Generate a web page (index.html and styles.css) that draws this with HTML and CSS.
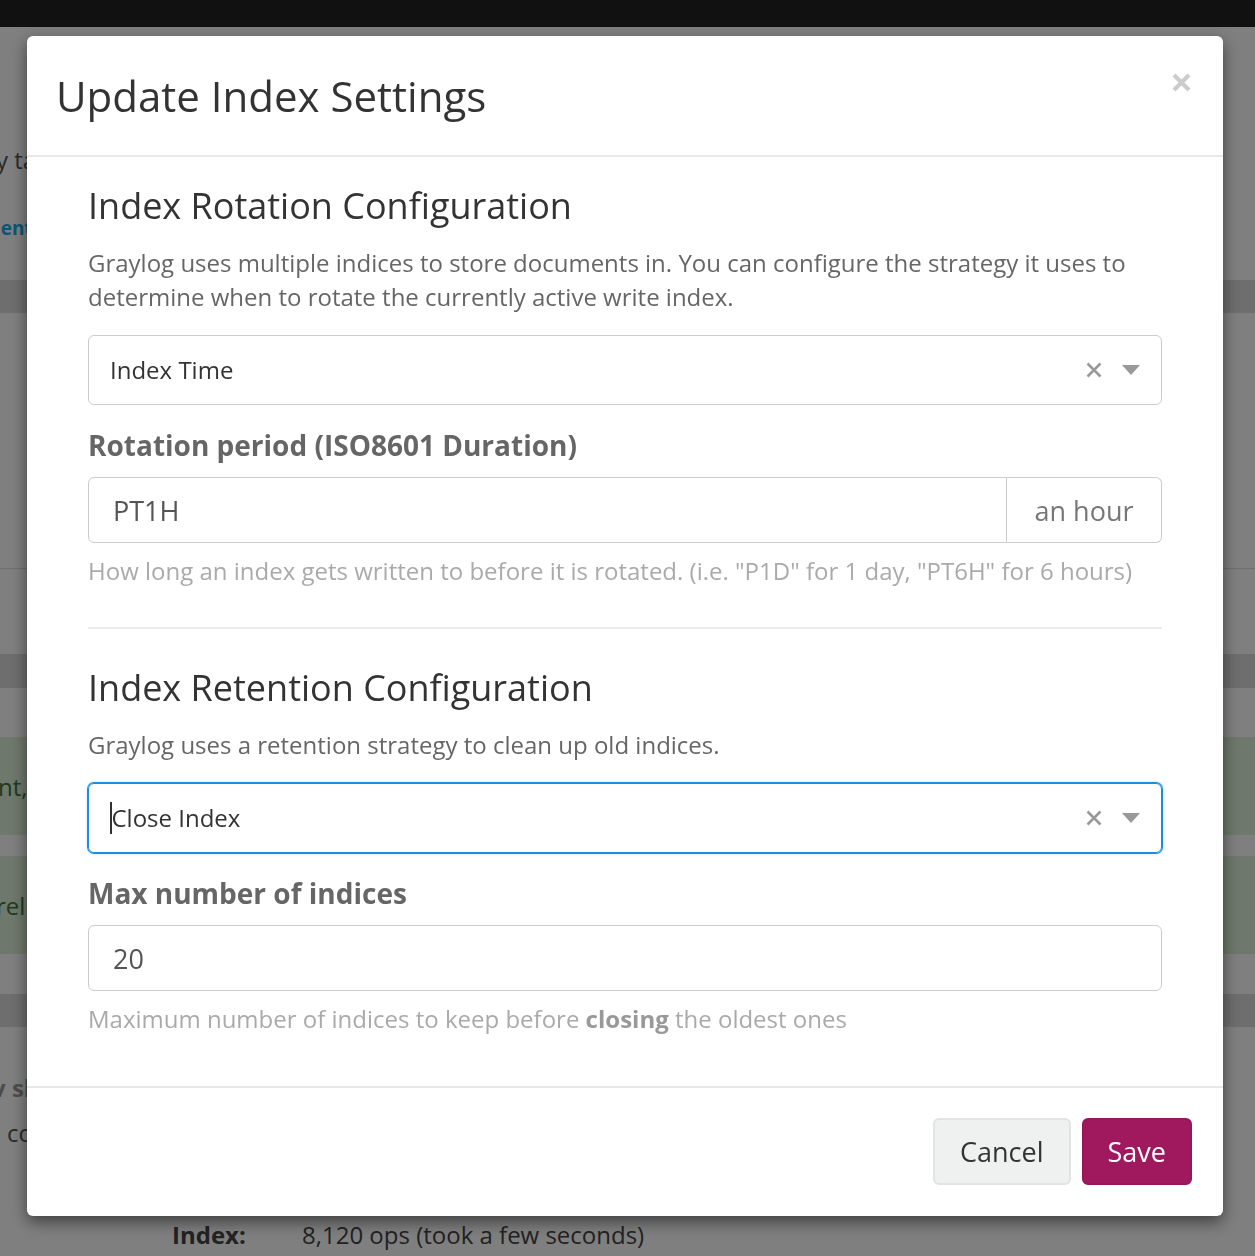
FILE: index.html
```html
<!DOCTYPE html>
<html lang="en">
<head>
<meta charset="utf-8">
<title>Update Index Settings</title>
<link rel="stylesheet" href="styles.css">
</head>
<body>
<div class="page">
  <div class="navbar"></div>
  <div class="bg-intro">
    <div class="bg-text">y take care of the rest of the setup</div>
    <div class="bg-link">ment settings</div>
  </div>
  <div class="bg-band band-a"></div>
  <div class="bg-block"></div>
  <div class="bg-gap gap-85"></div>
  <div class="bg-band band-b"></div>
  <div class="bg-gap gap-49"></div>
  <div class="bg-alert"><span class="bg-alert-text">nt, the index set is ready</span></div>
  <div class="bg-gap gap-21"></div>
  <div class="bg-alert"><span class="bg-alert-text alt">rel related indices</span></div>
  <div class="bg-gap gap-40"></div>
  <div class="bg-band band-a"></div>
  <div class="bg-bottom">
    <div class="bg-muted">v shards and replicas</div>
    <div class="bg-plain">co configuration</div>
    <div class="bg-stat"><span class="bg-stat-label">Index:</span><span class="bg-stat-value">8,120 ops (took a few seconds)</span></div>
  </div>
</div>

<div class="backdrop"></div>

<div class="modal">
  <div class="modal-header">
    <h2 class="modal-title">Update Index Settings</h2>
    <button class="close" type="button" aria-label="Close">
      <svg width="19" height="19" viewBox="0 0 19 19"><path d="M2 2 L17 17 M17 2 L2 17" stroke="#cccccc" stroke-width="4.2" stroke-linecap="butt" fill="none"/></svg>
    </button>
  </div>
  <div class="modal-body">
    <section class="config">
      <h3 class="config-title">Index Rotation Configuration</h3>
      <p class="config-desc">Graylog uses multiple indices to store documents in. You can configure the strategy it uses to determine when to rotate the currently active write index.</p>
      <div class="select">
        <span class="select-value">Index Time</span>
        <span class="select-clear"><svg width="16" height="16" viewBox="0 0 16 16"><path d="M1.5 1.5 L14.5 14.5 M14.5 1.5 L1.5 14.5" stroke="#999999" stroke-width="2.6" fill="none"/></svg></span>
        <span class="select-arrow"></span>
      </div>
      <label class="field-label">Rotation period (ISO8601 Duration)</label>
      <div class="input-group">
        <div class="input grow">PT1H</div>
        <div class="addon">an hour</div>
      </div>
      <p class="help">How long an index gets written to before it is rotated. (i.e. "P1D" for 1 day, "PT6H" for 6 hours)</p>
    </section>
    <hr class="divider">
    <section class="config">
      <h3 class="config-title">Index Retention Configuration</h3>
      <p class="config-desc">Graylog uses a retention strategy to clean up old indices.</p>
      <div class="select focused">
        <span class="caret-bar"></span><span class="select-value">Close Index</span>
        <span class="select-clear"><svg width="16" height="16" viewBox="0 0 16 16"><path d="M1.5 1.5 L14.5 14.5 M14.5 1.5 L1.5 14.5" stroke="#999999" stroke-width="2.6" fill="none"/></svg></span>
        <span class="select-arrow"></span>
      </div>
      <label class="field-label">Max number of indices</label>
      <div class="input">20</div>
      <p class="help">Maximum number of indices to keep before <strong>closing</strong> the oldest ones</p>
    </section>
  </div>
  <div class="modal-footer">
    <button class="btn btn-default" type="button">Cancel</button>
    <button class="btn btn-primary" type="button">Save</button>
  </div>
</div>
</body>
</html>
```

FILE: styles.css
```css
* { box-sizing: border-box; }
html, body { margin: 0; padding: 0; }
body {
  font-family: "Open Sans", "Noto Sans", "DejaVu Sans", sans-serif;
  background: #ffffff;
  color: #333333;
  width: 1255px;
  height: 1256px;
  overflow: hidden;
}

/* ---------- background page ---------- */
.page { width: 1255px; }
.navbar { height: 27px; background: #222222; }
.bg-intro { height: 253px; padding-top: 116px; font-size: 24px; line-height: 34px; }
.bg-text { margin-left: -4px; white-space: nowrap; color: #555555; }
.bg-link { margin-top: 34px; margin-left: -18px; white-space: nowrap; color: #16ace3; font-weight: 700; font-size: 19px; }
.bg-band { background: #dddddd; }
.band-a { height: 33px; }
.band-b { height: 34px; }
.bg-block { height: 256px; border-bottom: 1px solid #dddddd; }
.gap-85 { height: 85px; }
.gap-49 { height: 49px; }
.gap-21 { height: 21px; }
.gap-40 { height: 40px; }
.bg-alert {
  height: 98px;
  background: #dff0d8;
  display: flex;
  align-items: center;
  font-size: 24px;
  color: #3c763d;
  white-space: nowrap;
}
.bg-alert-text { margin-left: -2px; }
.bg-alert-text.alt { margin-left: -4px; }
.bg-bottom { padding-top: 44px; font-size: 24px; line-height: 34px; white-space: nowrap; }
.bg-muted { margin-left: -8px; color: #999999; font-weight: 700; }
.bg-plain { margin-top: 11px; margin-left: 7px; color: #555555; }
.bg-stat { margin-top: 68px; padding-left: 172px; display: flex; color: #444444; }
.bg-stat-label { width: 130px; font-weight: 700; }

.backdrop {
  position: fixed;
  inset: 0;
  background: rgba(0, 0, 0, 0.5);
}

/* ---------- modal ---------- */
.modal {
  position: fixed;
  left: 27px;
  top: 36px;
  width: 1196px;
  background: #ffffff;
  border-radius: 6px;
  box-shadow: 0 6px 16px rgba(0, 0, 0, 0.5);
}
.modal-header {
  position: relative;
  height: 121px;
  padding: 37px 31px 0 29px;
  border-bottom: 2px solid #e8e8e8;
}
.modal-title {
  margin: 0;
  font-size: 42px;
  line-height: 46px;
  font-weight: 400;
  color: #333333;
}
.close {
  position: absolute;
  right: 32px;
  top: 37px;
  width: 19px;
  height: 19px;
  padding: 0;
  border: 0;
  background: transparent;
  display: block;
}
.close svg { display: block; }

.modal-body { padding: 29px 61px 49px 61px; }
.config-title {
  margin: 0;
  font-size: 36px;
  line-height: 40px;
  font-weight: 400;
  color: #333333;
}
.config-desc {
  margin: 20px 0 0 0;
  font-size: 24px;
  line-height: 34.3px;
  color: #666666;
}

.select {
  margin-top: 20px;
  height: 70px;
  border: 1px solid #cccccc;
  border-radius: 6px;
  display: flex;
  align-items: center;
  padding: 0 21px 0 21px;
  font-size: 24px;
  color: #333333;
}
.select.focused {
  border-color: #1a8de0;
  box-shadow: 0 0 0 1px #1a8de0, 0 0 4px rgba(26, 141, 224, 0.35);
}
.select-value { flex: 1; }
.caret-bar {
  width: 1.5px;
  height: 32px;
  background: #333333;
}
.select-clear { display: flex; margin-right: 20px; }
.select-arrow {
  width: 0;
  height: 0;
  border-left: 9.5px solid transparent;
  border-right: 9.5px solid transparent;
  border-top: 10px solid #999999;
}

.field-label {
  display: block;
  margin-top: 21px;
  font-size: 28px;
  line-height: 38.6px;
  font-weight: 700;
  color: #666666;
}
.input-group { margin-top: 13px; display: flex; }
.input {
  height: 66px;
  border: 1px solid #cccccc;
  border-radius: 6px;
  padding: 0 24px;
  display: flex;
  align-items: center;
  font-size: 27px;
  color: #555555;
}
.field-label + .input { margin-top: 13px; }
.input.grow { flex: 1; border-radius: 6px 0 0 6px; }
.addon {
  height: 66px;
  width: 155px;
  border: 1px solid #cccccc;
  border-left: 0;
  border-radius: 0 6px 6px 0;
  display: flex;
  align-items: center;
  justify-content: center;
  font-size: 27px;
  color: #777777;
  background: #ffffff;
}
.help {
  margin: 11px 0 0 0;
  font-size: 24px;
  line-height: 34.3px;
  color: #aaaaaa;
}
.help strong { font-weight: 700; color: #999999; }
.divider {
  margin: 39px 0 39px 0;
  border: 0;
  border-top: 2px solid #ebebeb;
  height: 0;
}

.modal-footer {
  border-top: 2px solid #e8e8e8;
  padding: 30px 31px 31px 31px;
  display: flex;
  justify-content: flex-end;
  gap: 11px;
}
.btn {
  height: 67px;
  padding: 0 25px;
  border-radius: 6px;
  font-family: inherit;
  font-size: 27px;
  line-height: 1;
  border: 2px solid transparent;
}
.btn-default { background: #eff0f0; border-color: #e2e3e3; color: #333333; }
.btn-primary { background: #a0195f; border-color: #97185a; color: #ffffff; padding: 0 24px; }
```
